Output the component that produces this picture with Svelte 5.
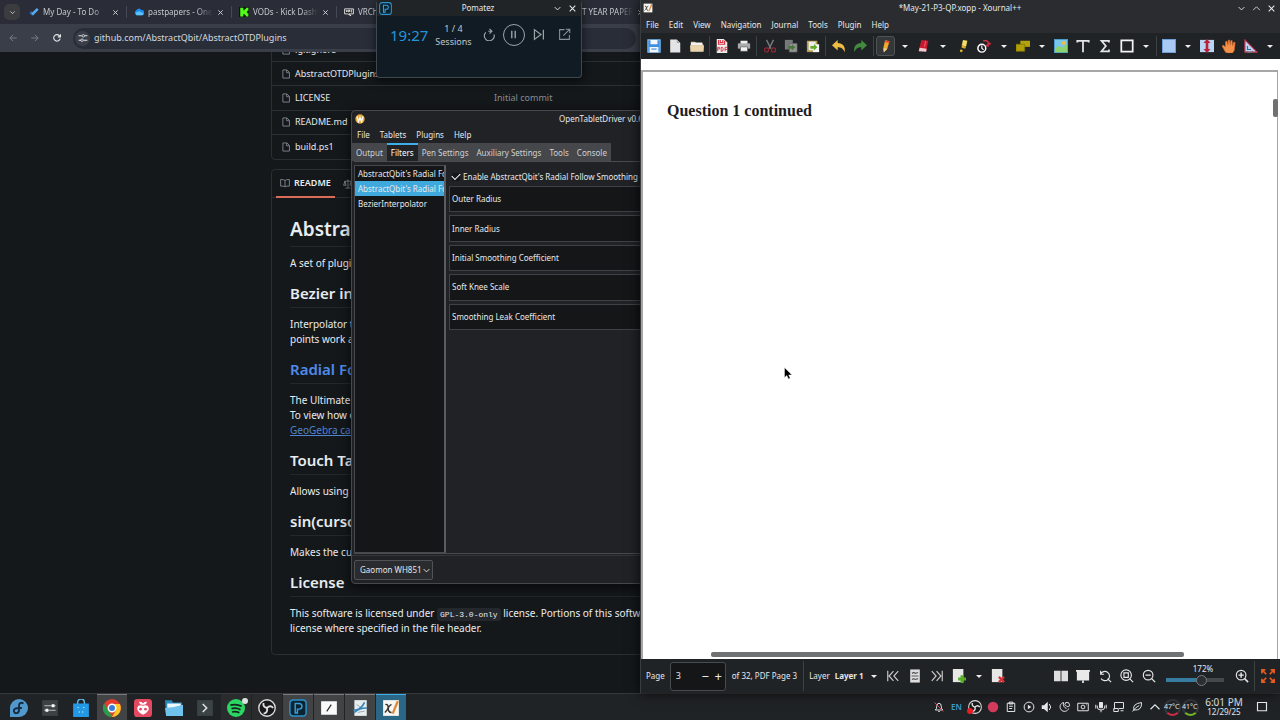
<script lang="ts">
  type Item = { id: string; label: string; state?: string };

  const tabs: Item[] = [
    { id: 'todo', label: 'My Day - To Do' },
    { id: 'cloud', label: 'pastpapers - OneDrive' },
    { id: 'kick', label: 'VODs - Kick Dashboard' },
    { id: 'vrc', label: 'VRChat' },
    { id: 'vrc', label: 'Home' },
    { id: 'cloud', label: 'PAST YEAR PAPERS' },
  ];

  const files = ['.gitignore', 'AbstractOTDPlugins.sln', 'LICENSE', 'README.md', 'build.ps1'];

  const otdTabs = ['Output', 'Filters', 'Pen Settings', 'Auxiliary Settings', 'Tools', 'Console'];
  const filters = ["AbstractQbit's Radial Follow", "AbstractQbit's Radial Follow", 'BezierInterpolator'];
  const settings = ['Outer Radius', 'Inner Radius', 'Initial Smoothing Coefficient', 'Soft Knee Scale', 'Smoothing Leak Coefficient'];

  const xMenus = ['File', 'Edit', 'View', 'Navigation', 'Journal', 'Tools', 'Plugin', 'Help'];
  const tools = [
    'save', 'new', 'open', '|', 'pdf', 'print', '|', 'cut', 'copy', 'paste', '|', 'undo', 'redo', '|',
    'pen', 'v', 'eraser', 'v', 'highlighter', 'laser', 'v', 'shapes', 'v', 'image', 'text', 'sigma', 'rect', 'v', '|',
    'fill', 'v', 'vspace', 'hand', 'setsquare', 'v',
  ];

  const apps: Item[] = [
    { id: 'fedora', label: 'Application Launcher' },
    { id: 'settings', label: 'System Settings' },
    { id: 'store', label: 'Discover' },
    { id: 'chrome', label: 'Chrome', state: 'open' },
    { id: 'berry', label: 'Raspberry' },
    { id: 'folder', label: 'Files' },
    { id: 'terminal', label: 'Terminal' },
    { id: 'spotify', label: 'Spotify', state: 'idle' },
    { id: 'obs', label: 'OBS Studio', state: 'idle' },
    { id: 'pomatez', label: 'Pomatez', state: 'open' },
    { id: 'note', label: 'Notes', state: 'open' },
    { id: 'tablet', label: 'OpenTabletDriver', state: 'open' },
    { id: 'xournal', label: 'Xournal++', state: 'active' },
  ];

  const tray = ['bell', 'lang', 'obs', 'record', 'clipboard', 'play', 'volume', 'night', 'camera', 'mic', 'display', 'leaf', 'up'];

  let page = $state(3);
  let zoom = $state(172);
  let selected = $state(1);
  let enabled = $state(true);
</script>

{#snippet icon(id: string)}
  <svg class="icon" viewBox="0 0 16 16" fill="none" stroke="#e4e6e8" stroke-width="1.3" aria-hidden="true">
    {#if id === 'todo'}
      <path d="M2 8l4.500 4.500" stroke="#2a66b8" stroke-width="4" />
      <path d="M5 12l9-9" stroke="#5aa9f0" stroke-width="4" />
    {:else if id === 'cloud'}
      <path d="M4 13a4 4 0 0 1-1-7 5 5 0 0 1 9-1 4 4 0 0 1 1 8z" fill="#1c8df0" stroke="none" />
      <path d="M4 13a4 4 0 0 1 0-5l5-1 6 3a3 3 0 0 1-2 3z" fill="#5cc1fb" stroke="none" />
    {:else if id === 'kick'}
      <path d="M0 0h16v16H0z" fill="#111" stroke="none" />
      <path d="M2 1h5v4h2V3h2V1h4v5h-2v4h2v5h-4v-2H9v-2H7v4H2z" fill="#53fc18" stroke="none" />
    {:else if id === 'vrc'}
      <path d="M1 3h14v8H8l3 3-5-3H1z" fill="#222" stroke="#fff" />
      <path d="M3.500 5l1 3 1-3M7.500 8.500V5h1.500v2h-1.500M13 5h-1.500v3H13" stroke="#fff" />
    {:else if id === 'file'}
      <path d="M3 1.500h6.500l4 4v9H3zM9 2v4h4" stroke="#8b949e" />
    {:else if id === 'book'}
      <path d="M8 4Q6 2 1 2.500v10.500q5-.5 7 1 2-1.500 7-1V2.500Q10 2 8 4zv10" stroke="#8b949e" />
    {:else if id === 'law'}
      <path d="M8 1v13M4 14.500h8M2 4l6-1 6 1M3 4L1 10h4zM13 4l-2 6h4z" stroke="#8b949e" />
    {:else if id === 'back'}
      <path d="M14 8H3m5-5L3 8l5 5" stroke="#767b86" stroke-width="1.600" />
    {:else if id === 'forward'}
      <path d="M2 8h11M8 3l5 5-5 5" stroke="#767b86" stroke-width="1.600" />
    {:else if id === 'reload'}
      <path d="M13 9a5.200 5.200 0 1 1-1.300-4.800L13.500 6M13.500 2v4.200H9.300" stroke-width="1.800" />
    {:else if id === 'tune'}
      <path d="M1 4.500h5M11 4.500h4M1 11.500h4M9 11.500h6" stroke-width="1.700" />
      <circle cx="8.500" cy="4.500" r="2" /><circle cx="6.500" cy="11.500" r="2" />
    {:else if id === 'down'}
      <path d="M3 5.500l5 5 5-5" stroke-width="1.700" />
    {:else if id === 'up'}
      <path d="M2 11l6-6 6 6" stroke-width="1.500" />
    {:else if id === 'close'}
      <path d="M3 3l10 10M13 3L3 13" stroke-width="1.900" />
    {:else if id === 'wayland'}
      <circle cx="8" cy="8" r="7.500" fill="#e6a93c" stroke="none" />
      <path d="M3 4l2.500 8L8 5.500l2.500 6.500L13 4" stroke="#fff" stroke-width="2" />
    {:else if id === 'reset'}
      <path d="M3.500 5.500A6 6 0 1 0 13.500 8M8 1l3 3-3 3M11 4H6.500" stroke="#9ba4aa" stroke-width="1.400" />
    {:else if id === 'pause'}
      <path d="M5.500 2.500v11M10.500 2.500v11" stroke="#9ba4aa" stroke-width="2" />
    {:else if id === 'skip'}
      <path d="M3 2l8 6-8 6zM14 2v12" stroke="#9ba4aa" stroke-width="1.500" />
    {:else if id === 'compact'}
      <path d="M8 2H2v12h12V8.500M9.500 1.500h5v5M14 2L6.500 9.500" stroke="#87929a" />
    {:else if id === 'save'}
      <path d="M1 1h14v14H1z" fill="#3e8fe0" stroke="#7bbcf4" />
      <path d="M4 1h8v5H4zM3 9h10v6H3z" fill="#f4f7fa" stroke="none" />
      <path d="M5 11.500h6" stroke="#3e8fe0" />
    {:else if id === 'new'}
      <path d="M2.500.5h7.500l4 4v11h-11.500z" fill="#e3e4e5" stroke="none" />
      <path d="M10 .5v4h4z" fill="#aaa" stroke="none" />
    {:else if id === 'open'}
      <path d="M1 3h5l1 2h8v9H1z" fill="#c6b69a" stroke="none" />
      <path d="M1 4h13v3H1z" fill="#f2f2f2" stroke="none" />
      <path d="M0 7h16l-.5 7.500h-15z" fill="#e8d3ad" stroke="none" />
    {:else if id === 'pdf'}
      <path d="M2 0h8l4 4v12H2z" fill="#eee" stroke="none" />
      <path d="M4 1v5h7V2M6 1v3h3V1" stroke="#dc2e3c" />
      <path d="M3 14V9.500h2v2H3M7 9.500h1.500l1 2-1 2.500H7zM11.500 14V9.500H14M11.500 12H14" stroke="#dc2e3c" stroke-width="1" />
    {:else if id === 'print'}
      <path d="M4 2h8v4H4z" fill="#eee" stroke="none" />
      <path d="M1 5h14v6H1z" fill="#a9abad" stroke="none" />
      <path d="M4 9h8v5H4z" fill="#f3f3f3" stroke="#555" stroke-width=".7" />
    {:else if id === 'cut'}
      <path d="M4 1l5 10M12 1L7 11" stroke="#75797d" stroke-width="1.600" />
      <circle cx="4" cy="12.500" r="2.300" stroke="#9b2733" /><circle cx="12" cy="12.500" r="2.300" stroke="#9b2733" />
    {:else if id === 'copy'}
      <path d="M1 1h9v11H1z" fill="#777a7b" stroke="none" />
      <path d="M6 5h9v10H6z" fill="#929593" stroke="#555" stroke-width=".6" />
      <path d="M5 8h4V6l4 3.500L9 13v-2H5z" fill="#47773a" stroke="none" />
    {:else if id === 'paste'}
      <path d="M1 2h12v13H1z" fill="#b49b50" stroke="none" />
      <path d="M3 3h8v10H3z" fill="#ececec" stroke="none" />
      <path d="M8 6h7v9H8z" fill="#f5f5f5" stroke="none" />
      <path d="M5 8h4V5.500L13 9.500 9 13v-2H5z" fill="#65a92c" stroke="none" />
    {:else if id === 'undo'}
      <path d="M0 7l6.500-6v3.500c6 0 9 4 8 10.500-2-4-4-5.500-8-5.500V13z" fill="#efbb42" stroke="none" />
    {:else if id === 'redo'}
      <path d="M16 7L9.500 1v3.500c-6 0-9 4-8 10.500 2-4 4-5.500 8-5.500V13z" fill="#428b3e" stroke="none" />
    {:else if id === 'pen'}
      <path d="M7 1.500l5 1-2.500 8.500-4 4-.5-5z" fill="#f2a82b" stroke="none" />
      <path d="M7 1.500l5 1-.6 2-4.900-1z" fill="#e84a38" stroke="none" />
      <path d="M5 10.500l4.500.5-4 4z" fill="#eecf9e" stroke="none" />
    {:else if id === 'eraser'}
      <path d="M5 1l8 1-2.500 12L2 13z" fill="#c8192f" stroke="none" />
      <path d="M3 10l8 1-.5 3.500L2 14z" fill="#f3c9cd" stroke="none" />
      <path d="M10 2l-1.500 7" stroke="#ef5868" />
    {:else if id === 'highlighter'}
      <path d="M8 1l5 1-1.500 6.500-5-1z" fill="#f6dc62" stroke="none" />
      <path d="M6.500 7.500l5 1-1 2.500-4-1z" fill="#d9b02c" stroke="none" />
      <circle cx="6" cy="13.500" r="1.600" fill="#d9b92c" stroke="none" />
    {:else if id === 'laser'}
      <path d="M7 2l4 0 3 3M9 9l4-3 3-1M12 5l1 4" stroke="#c72f42" stroke-width="1.700" />
      <circle cx="5.500" cy="10.500" r="4.500" fill="#1d1f22" stroke="#fff" stroke-width="1.700" />
      <path d="M5.500 7.500v3l2 2" stroke="#fff" />
    {:else if id === 'shapes'}
      <path d="M5 2h11v7H5z" fill="#b5a20c" stroke="none" />
      <path d="M0 6h10v8H0z" fill="#b19e09" stroke="#7e7205" stroke-width=".8" />
    {:else if id === 'image'}
      <path d="M.5.5h15v15H.5z" fill="#78c8e9" stroke="#4c9dce" />
      <path d="M1 11l4-3 4 2 6-4v9H1z" fill="#8cd26d" stroke="none" />
      <circle cx="11" cy="4.500" r="2.300" fill="#e9bd4e" stroke="none" />
    {:else if id === 'text'}
      <path d="M1.500 4V2h13v2M8 2v13" stroke-width="2" />
    {:else if id === 'sigma'}
      <path d="M12.500 4V2H4l5 6-5 6h8.500v-2" stroke-width="2" />
    {:else if id === 'rect'}
      <path d="M1.500 1.500h13v13h-13z" stroke="#f2f2f2" stroke-width="2" />
    {:else if id === 'fill'}
      <path d="M.5.5h15v15H.5z" fill="#a9c9f3" stroke="#6e9edb" />
    {:else if id === 'vspace'}
      <path d="M0 1h16v14H0z" fill="#b9d4f2" stroke="none" />
      <path d="M8 0l4 4.500H9.500v7H12L8 16l-4-4.500h2.500v-7H4z" fill="#ba2038" stroke="none" />
    {:else if id === 'hand'}
      <path d="M4 15l-4-7 1.500-1L4 9V3l1.500-.5L7 7V1.500L8.500 1l1 6 .5-5 1.500-.5L12 8l1.500-4.500L15 4l-1 9-2 3H6z" fill="#f39049" stroke="#e06a28" stroke-width=".6" />
    {:else if id === 'setsquare'}
      <path d="M1 1l14 14H1z" fill="#c0d5f1" stroke="#b9304d" />
      <path d="M4 8v4h4" stroke="#356ba9" /><path d="M3 14a6 6 0 0 0 7 0" stroke="#777" />
    {:else if id === 'first'}
      <path d="M2 2v12M8.500 2.500L3.500 8l5 5.500M14 2.500L9 8l5 5.500" stroke="#ccc" />
    {:else if id === 'last'}
      <path d="M14 2v12M7.500 2.500l5 5.500-5 5.500M2 2.500L7 8l-5 5.500" stroke="#ccc" />
    {:else if id === 'pagemark'}
      <path d="M2.500.5h11v15h-11z" fill="#dededf" stroke="none" />
      <path d="M4.500 5l2-1 2 1 3-1M4 8h8M4.500 12l2-1 2 1 3-1" stroke="#52565a" />
    {:else if id === 'addpage'}
      <path d="M1 0h12v15H1z" fill="#e7e7e6" stroke="none" />
      <path d="M11.500 7v9M7 11.500h9" stroke="#58ad27" stroke-width="3.500" />
    {:else if id === 'delpage'}
      <path d="M1 0h12v15H1z" fill="#e7e7e6" stroke="none" />
      <path d="M9 9l6 6M15 9l-6 6" stroke="#d92f38" stroke-width="2.500" />
    {:else if id === 'pages'}
      <path d="M0 2h7.500v12H0zM8.500 2H16v12H8.500z" fill="#dededf" stroke="none" />
    {:else if id === 'present'}
      <path d="M0 1h16v2H0zM1 3h14v10H1z" fill="#e9e9ea" stroke="none" />
      <path d="M8 13v3" stroke-width="2" />
    {:else if id === 'rotate'}
      <path d="M3 2v4h4M3 6a5.300 5.300 0 1 1 .5 5M11 11l4 4" />
    {:else if id === 'zoomfit'}
      <circle cx="7" cy="7" r="6" /><path d="M4.500 4.500h5v5h-5zM11 11l4 4" />
    {:else if id === 'zoomout'}
      <circle cx="7" cy="7" r="5.500" /><path d="M4 7h6M11 11l4 4" stroke-width="1.600" />
    {:else if id === 'zoomin'}
      <circle cx="7" cy="7" r="5.500" /><path d="M4 7h6M7 4v6M11 11l4 4" stroke-width="1.700" />
    {:else if id === 'full'}
      <path d="M1 5V1h4M1 1l5 5M11 1h4v4M15 1l-5 5M1 11v4h4M1 15l5-5M15 11v4h-4M15 15l-5-5" stroke="#e55b20" stroke-width="1.900" />
    {:else if id === 'fedora'}
      <path d="M8 0a8 8 0 0 1 0 16H0V8a8 8 0 0 1 8-8z" fill="#5199cc" stroke="none" />
      <path d="M12 4C9.500 2.500 8 4 8 6v4c0 3-4 3.500-4.500 1S5.500 8 8 8h2.500" stroke="#172c40" stroke-width="1.700" />
    {:else if id === 'settings'}
      <path d="M1 1h14v14H1z" fill="#3c4145" stroke="none" />
      <path d="M3 6h10M3 10h10" stroke="#b9bec2" stroke-width="1" />
      <path d="M9.500 6H12M4 10h2.500" stroke="#fff" stroke-width="2.500" />
    {:else if id === 'store'}
      <path d="M5 5V3a3 3 0 0 1 6 0v2" stroke="#5fb8ea" />
      <path d="M1 4h14v12H1z" fill="#2399e5" stroke="none" />
      <path d="M5.500 7v1M10.500 7v1M6 11.500h1M9 11.500h1" stroke="#a5e0ff" />
    {:else if id === 'chrome'}
      <circle cx="8" cy="8" r="8" fill="#e33b2e" stroke="none" />
      <path d="M1 4l5 8 2 4A8 8 0 0 1 1 4z" fill="#289c4b" stroke="none" />
      <path d="M8 4.500h7A8 8 0 0 1 8 16l3.500-6z" fill="#fac928" stroke="none" />
      <circle cx="8" cy="8" r="3.300" fill="#397cdd" stroke="#fff" />
    {:else if id === 'berry'}
      <rect width="16" height="16" rx="3" fill="#e34a62" stroke="none" />
      <path d="M8 6Q6 5 4 6 2 8 3.500 10.500 5 13 8 14q3-1 4.500-3.500Q14 8 12 6 10 5 8 6z" fill="#fff" stroke="none" />
      <path d="M8 5Q5 5.500 4.500 2.500 7 2 8 4q1-2 3.500-1.500Q11 5.500 8 5z" fill="#fff" stroke="none" />
      <circle cx="5.800" cy="9" r="1.200" fill="#e34a62" stroke="none" /><circle cx="10.200" cy="9" r="1.200" fill="#e34a62" stroke="none" />
    {:else if id === 'folder'}
      <path d="M0 1h6l1 2h8v12H1z" fill="#288bbd" stroke="none" />
      <path d="M2 4h12v4H2z" fill="#eef7fb" stroke="none" />
      <path d="M0 8l8-1 8-2v10H1z" fill="#6fc2eb" stroke="none" />
    {:else if id === 'terminal'}
      <path d="M1 1h14v14H1z" fill="#3b4345" stroke="none" /><path d="M6 4.500L9.500 8 6 11.500" />
    {:else if id === 'spotify'}
      <circle cx="8" cy="8" r="8" fill="#2bd665" stroke="none" />
      <path d="M3 5.500q5.500-1.500 10 1M4 8.500q4.500-1.200 8 1M4.500 11.500q3.500-1 6.500.8" stroke="#14251a" stroke-width="1.500" />
    {:else if id === 'obs'}
      <circle cx="8" cy="8" r="7.300" fill="#19191c" stroke="#ddd" stroke-width="1.200" />
      <path d="M8 8Q4 7 5 3.500M8 8q3-3 5.500 0M8 8q1 4-3 5" stroke="#ddd" stroke-width="1.700" />
    {:else if id === 'pomatez'}
      <rect x=".8" y=".8" width="14.400" height="14.400" rx="3" fill="#0c2330" stroke="#2c91cd" stroke-width="1.300" />
      <path d="M5.500 12.500V4H9a2.400 2.400 0 0 1 0 5H7.500v3.500z" stroke="#3b9dd4" />
    {:else if id === 'note'}
      <path d="M1 2h14v12H1z" fill="#fafafa" stroke="none" /><path d="M6 11l4-6" stroke="#222" stroke-width="1" />
    {:else if id === 'tablet'}
      <path d="M3 1h11v14H3z" fill="#e7eced" stroke="none" />
      <path d="M5 5q3 1 3 3M6 12q3-1 6-1" stroke="#9aa5ab" stroke-width=".8" />
      <path d="M2 10q7 0 10-7M3 12q4-4 11-4" stroke="#3285b7" stroke-width="1.500" />
    {:else if id === 'xournal'}
      <path d="M1 1h14v14H1z" fill="#f7f6f2" stroke="none" />
      <path d="M3 5q2.500-1 2.500 3T8.500 12M8.500 5Q7 5 5.500 8T2.500 12" stroke="#333" />
      <path d="M9.500 13L14 2" stroke="#e38532" stroke-width="2" />
    {:else if id === 'bell'}
      <path d="M3 12q2-1 2-5 0-4 3-4t3 4q0 4 2 5zM7 14h2" /><path d="M2 2l12 12" stroke="#d14b5c" />
    {:else if id === 'record'}
      <circle cx="8" cy="8" r="7" fill="#d33a5c" stroke="none" />
    {:else if id === 'clipboard'}
      <path d="M3 3h10v11H3zM5.500 1.500h5V4h-5zM5.500 7h5M5.500 10h4" />
    {:else if id === 'play'}
      <circle cx="8" cy="8" r="6.500" /><path d="M6.500 5v6l4.500-3z" fill="#e4e6e8" stroke="none" />
    {:else if id === 'volume'}
      <path d="M1 5.500h3L9 1v14l-5-4.500H1z" fill="#e4e6e8" stroke="none" /><path d="M11 4q4 4 0 8" />
    {:else if id === 'night'}
      <path d="M6 2a6 6 0 1 0 7 8M6 2q-1 6 4 8M9 2q5-1 5 3t-4 2-1-5z" />
    {:else if id === 'camera'}
      <path d="M1 3h14v10H1z" /><circle cx="8" cy="8" r="2.500" /><path d="M12 5h1" />
    {:else if id === 'mic'}
      <path d="M6 2h4v7H6z" fill="#e4e6e8" /><path d="M3 6v2q0 4 5 4t5-4V6M8 12v3M1 5v5M15 5v5" />
    {:else if id === 'display'}
      <path d="M2 2h12v8H8M2 2v9M1 10h6v4H1zM10 13h4" />
    {:else if id === 'leaf'}
      <path d="M2 14q4-6 9-8M4 12q-3-8 10-10 1 11-10 10z" />
    {:else if id === 'desktop'}
      <path d="M2 2h12v11H2zM2 13h12" stroke-width="1.500" />
    {/if}
  </svg>
{/snippet}

<div class="desktop">
  <div class="workspace">
    <section class="browser">
      <div class="tabstrip">
        <button class="tab-search" aria-label="Search tabs">{@render icon('down')}</button>
        {#each tabs as tab}
          <div class="tab">
            {@render icon(tab.id)}
            <span>{tab.label}</span>
            <button aria-label="Close tab">{@render icon('close')}</button>
          </div>
        {/each}
      </div>
      <div class="navbar">
        <button aria-label="Back">{@render icon('back')}</button>
        <button aria-label="Forward">{@render icon('forward')}</button>
        <button aria-label="Reload">{@render icon('reload')}</button>
        <div class="address">
          <span class="site">{@render icon('tune')}</span>
          <input aria-label="Address" value="github.com/AbstractQbit/AbstractOTDPlugins" />
        </div>
      </div>

      <div class="page">
        <div class="files">
          {#each files as name}
            <div class="file">
              {@render icon('file')}
              <a href="#{name}">{name}</a>
              <span>{name === 'LICENSE' ? 'Initial commit' : ''}</span>
            </div>
          {/each}
        </div>

        <article class="readme">
          <header>
            <a class="current" href="#readme">{@render icon('book')}README</a>
            {@render icon('law')}
          </header>
          <div class="markdown">
            <h1>AbstractOTDPlugins</h1>
            <p>A set of plugins for OpenTabletDriver</p>
            <h2>Bezier interpolator</h2>
            <p>Interpolator that uses bezier curves<br />points work as control points</p>
            <h2><a href="#radial">Radial Follow</a></h2>
            <p>The Ultimate smoothing filter<br />To view how one works see<br /><a class="link" href="#calc">GeoGebra calculator</a></p>
            <h2>Touch Tapping</h2>
            <p>Allows using touch</p>
            <h2>sin(cursor)</h2>
            <p>Makes the cursor wobble</p>
            <h2>License</h2>
            <p>
              This software is licensed under <code>GPL-3.0-only</code> license. Portions of this software<br />
              license where specified in the file header.
            </p>
          </div>
        </article>
      </div>

      <section class="otd">
        <div class="otd-title">{@render icon('wayland')}<span>OpenTabletDriver v0.6.6</span></div>
        <nav class="otd-menu">
          {#each ['File', 'Tablets', 'Plugins', 'Help'] as item}<button>{item}</button>{/each}
        </nav>
        <div class="otd-tabs">
          {#each otdTabs as item}<button class:current-tab={item === 'Filters'}>{item}</button>{/each}
        </div>
        <div class="otd-body">
          <div class="filters">
            {#each filters as item, i}
              <button class:selected={selected === i} onclick={() => (selected = i)}>{item}</button>
            {/each}
          </div>
          <div class="settings">
            <label><input type="checkbox" bind:checked={enabled} />Enable AbstractQbit's Radial Follow Smoothing (Tablet)</label>
            <div class="groups">
              {#each settings as item}<div class="group">{item}</div>{/each}
            </div>
          </div>
        </div>
        <div class="otd-footer">
          <span class="select">
            <select aria-label="Tablet"><option>Gaomon WH851</option></select>
            {@render icon('down')}
          </span>
        </div>
      </section>

      <section class="pomatez">
        <div class="pomatez-title">
          {@render icon('pomatez')}
          <span>Pomatez</span>
          <button aria-label="Minimize">{@render icon('down')}</button>
          <button aria-label="Close">{@render icon('close')}</button>
        </div>
        <div class="timer">
          <time>19:27</time>
          <span class="sessions">1 / 4<br />Sessions</span>
          <button aria-label="Reset">{@render icon('reset')}</button>
          <button class="pause" aria-label="Pause">{@render icon('pause')}</button>
          <button aria-label="Skip">{@render icon('skip')}</button>
          <button class="compact" aria-label="Leave compact mode">{@render icon('compact')}</button>
        </div>
      </section>
    </section>

    <section class="xournal">
      <div class="x-title">
        {@render icon('xournal')}
        <span>*May-21-P3-QP.xopp - Xournal++</span>
        <button aria-label="Minimize">{@render icon('down')}</button>
        <button aria-label="Maximize">{@render icon('up')}</button>
        <button aria-label="Close">{@render icon('close')}</button>
      </div>
      <nav class="x-menu">
        {#each xMenus as item}<button>{item}</button>{/each}
      </nav>
      <div class="x-tools">
        {#each tools as tool}
          {#if tool === '|'}
            <i class="sep"></i>
          {:else if tool === 'v'}
            <button class="caret" aria-label="Options"></button>
          {:else}
            <button class="tool" class:pressed={tool === 'pen'} aria-label={tool}>{@render icon(tool)}</button>
          {/if}
        {/each}
      </div>
      <div class="canvas">
        <div class="sheet"><h2>Question 1 continued</h2></div>
        <i class="v-scroll"></i>
        <i class="h-scroll"></i>
        <svg class="pointer" viewBox="0 0 8 13" aria-hidden="true">
          <path d="M.5.5v10l2.300-2L4.500 12l1.700-.8-1.500-3.300H8z" fill="#000" stroke="#fff" stroke-width=".4" />
        </svg>
      </div>
      <div class="x-status">
        <label for="page">Page</label>
        <div class="spin">
          <input id="page" type="number" bind:value={page} />
          <button aria-label="Previous page" onclick={() => page--}>−</button>
          <button aria-label="Next page" onclick={() => page++}>+</button>
        </div>
        <span class="count">of 32, PDF Page 3</span>
        <i class="sep tall"></i>
        <span class="layer-label">Layer</span>
        <button class="layer">Layer 1</button>
        <button class="caret" aria-label="Choose layer"></button>
        {#each ['first', 'pagemark', 'last', 'addpage'] as id}
          <button class="tool" aria-label={id}>{@render icon(id)}</button>
        {/each}
        <button class="caret" aria-label="Page options"></button>
        <button class="tool" aria-label="Delete page">{@render icon('delpage')}</button>
        <span class="grow"></span>
        {#each ['pages', 'present', 'rotate', 'zoomfit', 'zoomout'] as id}
          <button class="tool" aria-label={id}>{@render icon(id)}</button>
        {/each}
        <div class="zoom">
          <output for="zoom">{zoom}%</output>
          <input id="zoom" type="range" min="30" max="250" bind:value={zoom} aria-label="Zoom" />
        </div>
        <button class="tool" aria-label="Zoom in">{@render icon('zoomin')}</button>
        <i class="sep tall"></i>
        <button class="tool" aria-label="Fullscreen">{@render icon('full')}</button>
      </div>
    </section>
  </div>

  <footer class="taskbar">
    {#each apps as app}
      <button class="app {app.state ?? ''}" aria-label={app.label}>
        {@render icon(app.id)}
        {#if app.id === 'spotify'}<i class="badge"></i>{/if}
      </button>
    {/each}
    <span class="grow"></span>
    {#each tray as id}
      {#if id === 'lang'}
        <button class="tray lang">EN</button>
      {:else}
        <button class="tray" class:big={id === 'obs'} aria-label={id}>
          {@render icon(id)}
          {#if id === 'obs'}<i class="dot"></i>{/if}
        </button>
      {/if}
    {/each}
    <span class="temp hot">47°C</span>
    <span class="temp">41°C</span>
    <div class="clock"><time>6:01 PM</time><span>12/29/25</span></div>
    <button class="tray desk" aria-label="Show desktop">{@render icon('desktop')}</button>
  </footer>
</div>

<style>
  :global(body) {
    background: #14181b;
  }

  .desktop {
    display: flex;
    flex-direction: column;
    height: 100vh;
    overflow: hidden;
    color: #e6e8ea;
    font: 8px/12px "Noto Sans", "Open Sans", sans-serif;
  }

  .desktop * {
    box-sizing: border-box;
  }

  button,
  input,
  select {
    margin: 0;
    padding: 0;
    border: 0;
    background: none;
    color: inherit;
    font: inherit;
    outline: none;
  }

  button {
    display: flex;
    align-items: center;
    justify-content: center;
    flex: none;
    white-space: nowrap;
  }

  a {
    color: inherit;
    text-decoration: none;
  }

  .icon {
    display: block;
    flex: none;
    width: 10px;
    height: 10px;
  }

  .grow {
    flex: 1;
  }

  .workspace {
    display: grid;
    grid-template-columns: 1fr 1fr;
    flex: 1;
    min-height: 0;
  }

  /* Browser */
  .browser {
    position: relative;
    display: flex;
    flex-direction: column;
    min-width: 0;
    overflow: hidden;
    background: #14181b;
  }

  .tabstrip {
    display: flex;
    align-items: center;
    flex: none;
    height: 24px;
    padding-left: 4px;
    background: #2a2d37;
  }

  .tab-search {
    width: 16px;
    height: 16px;
    margin-right: 2px;
    border-radius: 5px;
    background: #3b3c40;
  }

  .tab-search .icon {
    width: 7px;
    height: 7px;
  }

  .tab {
    display: flex;
    align-items: center;
    flex: none;
    gap: 4px;
    width: 105px;
    height: 12px;
    padding: 0 7px;
    border-right: 1px solid #444955;
    color: #c5c8ce;
  }

  .tab span {
    flex: 1;
    overflow: hidden;
    white-space: nowrap;
    mask-image: linear-gradient(90deg, #000 75%, transparent);
  }

  .tab button .icon {
    width: 7px;
    height: 7px;
  }

  .navbar {
    display: flex;
    align-items: center;
    flex: none;
    height: 28px;
    padding: 0 4px 0 8px;
    background: #3a3e49;
  }

  .navbar button {
    width: 10px;
    margin-right: 12px;
  }

  .address {
    display: flex;
    align-items: center;
    flex: 1;
    gap: 4px;
    height: 21px;
    margin-left: -1px;
    padding-left: 2px;
    border-radius: 11px;
    background: #292d38;
  }

  .site {
    display: grid;
    place-items: center;
    width: 15px;
    height: 15px;
    border-radius: 8px;
    background: #3a3e49;
  }

  .address input {
    flex: 1;
    color: #d5d8de;
    font-size: 9px;
  }

  .page {
    flex: 1;
    min-height: 0;
    margin: 0 -20px 0 271px;
    overflow: hidden;
    white-space: nowrap;
  }

  .files {
    display: grid;
    grid-auto-rows: 1fr;
    height: 123px;
    margin-top: -15px;
    border: 1px solid #2a2f35;
    border-radius: 4px;
  }

  .file {
    display: grid;
    grid-template-columns: 10px 195px 1fr;
    align-items: center;
    gap: 4px;
    padding-left: 9px;
    border-bottom: 1px solid #2a2f35;
    font-size: 9px;
  }

  .file:last-child {
    border-bottom: 0;
  }

  .file span {
    color: #858c93;
  }

  .readme {
    margin-top: 9px;
    border: 1px solid #2a2f35;
    border-radius: 4px;
    color: #e8ecf0;
    font-size: 10px;
    line-height: 15px;
  }

  .readme header {
    display: flex;
    align-items: center;
    gap: 8px;
    height: 28px;
    padding-left: 4px;
    border-bottom: 1px solid #2a2f35;
    font-size: 9px;
    font-weight: 600;
  }

  .current {
    display: flex;
    align-items: center;
    gap: 4px;
    height: 28px;
    padding: 0 4px;
    border-bottom: 2px solid #d96c57;
  }

  .markdown {
    padding: 18px;
  }

  h1,
  h2,
  p {
    margin: 0;
  }

  .markdown h1,
  .markdown h2 {
    border-bottom: 1px solid #23282d;
    font-weight: 600;
  }

  .markdown h1 {
    padding-bottom: 4px;
    font-size: 19px;
    line-height: 26px;
  }

  .markdown h2 {
    margin-top: 12px;
    padding-bottom: 4px;
    font-size: 15px;
    line-height: 20px;
  }

  .markdown h2 a {
    color: #4f8bea;
  }

  .markdown p {
    margin-top: 9px;
  }

  .link {
    color: #5184cd;
    text-decoration: underline;
  }

  code {
    padding: 2px 3px;
    border-radius: 3px;
    background: #24282c;
    font: 8px/10px "Liberation Mono", monospace;
  }

  /* OpenTabletDriver */
  .otd {
    position: absolute;
    top: 110px;
    right: -4px;
    left: 351px;
    display: flex;
    flex-direction: column;
    height: 474px;
    border: 1px solid #46484b;
    border-radius: 4px;
    background: #202225;
    box-shadow: 0 3px 12px #000a;
    white-space: nowrap;
  }

  .otd-title {
    display: flex;
    align-items: center;
    height: 15px;
    padding-left: 3px;
  }

  .otd-title span {
    margin-left: 194px;
  }

  .otd-menu {
    display: flex;
    gap: 10px;
    height: 17px;
    padding-left: 5px;
  }

  .otd-tabs {
    display: flex;
    height: 18px;
  }

  .otd-tabs button {
    padding: 0 4px;
    border-top: 1px solid transparent;
    background: #45474a;
    color: #d0d2d4;
  }

  .otd-tabs .current-tab {
    border-top: 2px solid #3daee9;
    background: #202225;
    color: #fff;
  }

  .otd-body {
    display: flex;
    flex: 1;
    margin-left: 2px;
    padding-top: 3px;
    border-top: 1px solid #494b4e;
    border-bottom: 1px solid #494b4e;
  }

  .filters {
    flex: none;
    width: 92px;
    border: 1px solid #46484b;
    border-right: 2px solid #5a5c5e;
    background: #141618;
    overflow: hidden;
  }

  .filters button {
    justify-content: flex-start;
    width: 100%;
    height: 15px;
    padding-left: 3px;
  }

  .filters .selected {
    background: #3fa9dd;
  }

  .settings {
    flex: 1;
    padding: 3px 0 0 3px;
    overflow: hidden;
  }

  .settings label {
    display: flex;
    align-items: center;
    gap: 3px;
    height: 18px;
    padding-left: 3px;
  }

  .settings input {
    appearance: none;
    width: 8px;
    height: 8px;
    background: #141618;
  }

  .settings input:checked::after {
    content: "";
    display: block;
    width: 7px;
    height: 4px;
    border: solid #fff;
    border-width: 0 0 1px 1px;
    rotate: -45deg;
  }

  .groups {
    display: grid;
    grid-auto-rows: 1fr;
    gap: 3px;
    height: 144px;
  }

  .group {
    display: flex;
    align-items: center;
    padding-left: 2px;
    border: 1px solid #3f4144;
    background: #141618;
  }

  .otd-footer {
    display: flex;
    align-items: center;
    height: 28px;
    margin-top: 1px;
    padding-left: 2px;
    border-top: 1px solid #333538;
  }

  .select {
    position: relative;
  }

  .select select {
    appearance: none;
    display: block;
    width: 79px;
    height: 20px;
    padding-left: 5px;
    border: 1px solid #505255;
    border-radius: 2px;
    background: #292b2e;
  }

  .select .icon {
    position: absolute;
    top: 6px;
    right: 2px;
    width: 9px;
    height: 9px;
    pointer-events: none;
  }

  /* Pomatez */
  .pomatez {
    position: absolute;
    top: 0;
    left: 376px;
    width: 206px;
    height: 78px;
    border: 1px solid #3e4850;
    border-top: 0;
    border-radius: 4px;
    background: #101b23;
    box-shadow: 0 3px 10px #0009;
  }

  .pomatez-title {
    display: flex;
    align-items: center;
    gap: 6px;
    height: 16px;
    padding: 0 4px 0 2px;
    background: #202427;
  }

  .pomatez-title > .icon {
    width: 13px;
    height: 13px;
  }

  .pomatez-title span {
    flex: 1;
    padding-left: 11px;
    text-align: center;
  }

  .pomatez-title button .icon,
  .x-title button .icon {
    width: 9px;
    height: 9px;
  }

  .timer {
    display: flex;
    align-items: center;
    gap: 7px;
    height: 37px;
    padding: 0 10px 0 13px;
    color: #c0c6ca;
  }

  .timer > time {
    color: #2495db;
    font-size: 15px;
  }

  .sessions {
    margin-right: 4px;
    font-size: 9px;
    line-height: 13px;
    text-align: center;
  }

  .timer .icon {
    width: 13px;
    height: 13px;
  }

  .timer .pause {
    width: 22px;
    height: 22px;
    border: 1px solid #9ba4aa;
    border-radius: 50%;
  }

  .pause .icon {
    width: 11px;
    height: 11px;
  }

  .timer .compact {
    margin-left: auto;
  }

  /* Xournal++ */
  .xournal {
    position: relative;
    display: flex;
    flex-direction: column;
    min-width: 0;
    border-left: 1px solid #3a3d40;
    background: #202326;
    box-shadow: 0 0 12px #000c;
  }

  .x-title {
    display: flex;
    align-items: center;
    flex: none;
    gap: 6px;
    height: 16px;
    padding: 0 4px 0 2px;
    background: #2a2c2f;
  }

  .x-title span {
    flex: 1;
    padding-left: 30px;
    text-align: center;
  }

  .x-menu {
    display: flex;
    flex: none;
    gap: 10px;
    height: 17px;
    padding-left: 5px;
    background: #2a2c2f;
  }

  .x-tools {
    display: flex;
    align-items: center;
    justify-content: space-between;
    flex: none;
    height: 26px;
    padding: 0 3px;
  }

  .tool {
    width: 19px;
    height: 20px;
  }

  .tool .icon {
    width: 14px;
    height: 14px;
  }

  .pressed {
    border: 1px solid #505356;
    border-radius: 3px;
    background: #34373a;
  }

  .sep {
    width: 1px;
    height: 20px;
    background: #3e4144;
  }

  .caret {
    width: 14px;
    height: 20px;
  }

  .caret::after {
    content: "";
    border: 3px solid transparent;
    border-top-color: #eee;
    border-bottom: 0;
  }

  .canvas {
    position: relative;
    display: flex;
    flex: 1;
    padding-top: 11px;
    background: #fff;
  }

  .sheet {
    flex: 1;
    margin-right: 2px;
    padding: 29px 0 0 24px;
    border: 2px solid #a6a6a6;
    border-width: 2px 1px 0 2px;
    color: #1d1d1f;
  }

  .sheet h2 {
    font: bold 16px/20px "Liberation Serif", serif;
  }

  .v-scroll,
  .h-scroll {
    position: absolute;
    border-radius: 2px;
    background: #707172;
  }

  .v-scroll {
    top: 40px;
    right: 2px;
    width: 5px;
    height: 18px;
  }

  .h-scroll {
    right: 15%;
    bottom: 2px;
    left: 11%;
    height: 5px;
  }

  .pointer {
    position: absolute;
    top: 308px;
    left: 143px;
    width: 8px;
    height: 13px;
  }

  .x-status {
    display: flex;
    align-items: center;
    flex: none;
    gap: 3px;
    height: 34px;
    padding: 0 3px 0 5px;
    white-space: nowrap;
  }

  .spin {
    display: flex;
    align-items: center;
    width: 56px;
    height: 29px;
    margin: 0 3px 0 2px;
    padding-left: 5px;
    border: 1px solid #484b4e;
    border-radius: 3px;
    background: #141618;
  }

  .spin input {
    flex: 1;
    width: 20px;
    min-width: 0;
    appearance: textfield;
    font-size: 9px;
  }

  .spin button {
    width: 13px;
    font-size: 13px;
  }

  .sep.tall {
    height: 30px;
  }

  .count {
    margin-right: 3px;
  }

  .layer-label,
  .layer {
    margin-left: 2px;
  }

  .layer {
    font-weight: 700;
  }

  .x-status .layer ~ .tool {
    margin: 0;
  }

  .zoom {
    display: flex;
    flex-direction: column;
    width: 58px;
    margin: 0 5px 4px;
  }

  .zoom output {
    padding-left: 16px;
    text-align: center;
  }

  .zoom input {
    appearance: none;
    width: 100%;
    height: 11px;
    background: linear-gradient(90deg, #367c9f 65%, #45484b 65%) center / 100% 4px no-repeat;
  }

  .zoom input::-webkit-slider-thumb {
    appearance: none;
    width: 11px;
    height: 11px;
    border: 1px solid #777b7f;
    border-radius: 50%;
    background: #2c2f32;
  }

  /* Panel */
  .taskbar {
    display: flex;
    align-items: center;
    flex: none;
    gap: 1px;
    height: 27px;
    padding: 0 10px 0 4px;
    border-top: 1px solid #36393c;
    background: #202326;
  }

  .app {
    position: relative;
    width: 30px;
    height: 26px;
    border-top: 1px solid transparent;
  }

  .app .icon {
    width: 18px;
    height: 18px;
  }

  .idle {
    background: #292b2d;
  }

  .open {
    border-color: #77797b;
    background: #414345;
  }

  .active {
    border-color: #3daee9;
    background: #2b6784;
  }

  .badge {
    position: absolute;
    top: 3px;
    right: 3px;
    width: 6px;
    height: 6px;
    border-radius: 50%;
    background: #dfe2e3;
  }

  .tray {
    position: relative;
    width: 17px;
    height: 20px;
  }

  .tray .icon {
    width: 12px;
    height: 12px;
  }

  .tray.big .icon {
    width: 14px;
    height: 14px;
  }

  .lang {
    color: #3d9ccc;
    font-weight: 600;
  }

  .dot {
    position: absolute;
    bottom: 3px;
    left: 1px;
    width: 6px;
    height: 6px;
    border-radius: 50%;
    background: #ed1c24;
  }

  .temp {
    width: 17px;
    height: 17px;
    border: 2px solid #34383b;
    border-bottom-color: #76b82a;
    border-radius: 50%;
    font-size: 7px;
    line-height: 12px;
    text-indent: -2px;
    white-space: nowrap;
  }

  .hot {
    border-bottom-color: #cf2d45;
  }

  .clock {
    display: flex;
    flex-direction: column;
    align-items: center;
    width: 40px;
    margin: 0 8px 0 4px;
    line-height: 10px;
  }

  .clock time {
    font-size: 10px;
  }
</style>
